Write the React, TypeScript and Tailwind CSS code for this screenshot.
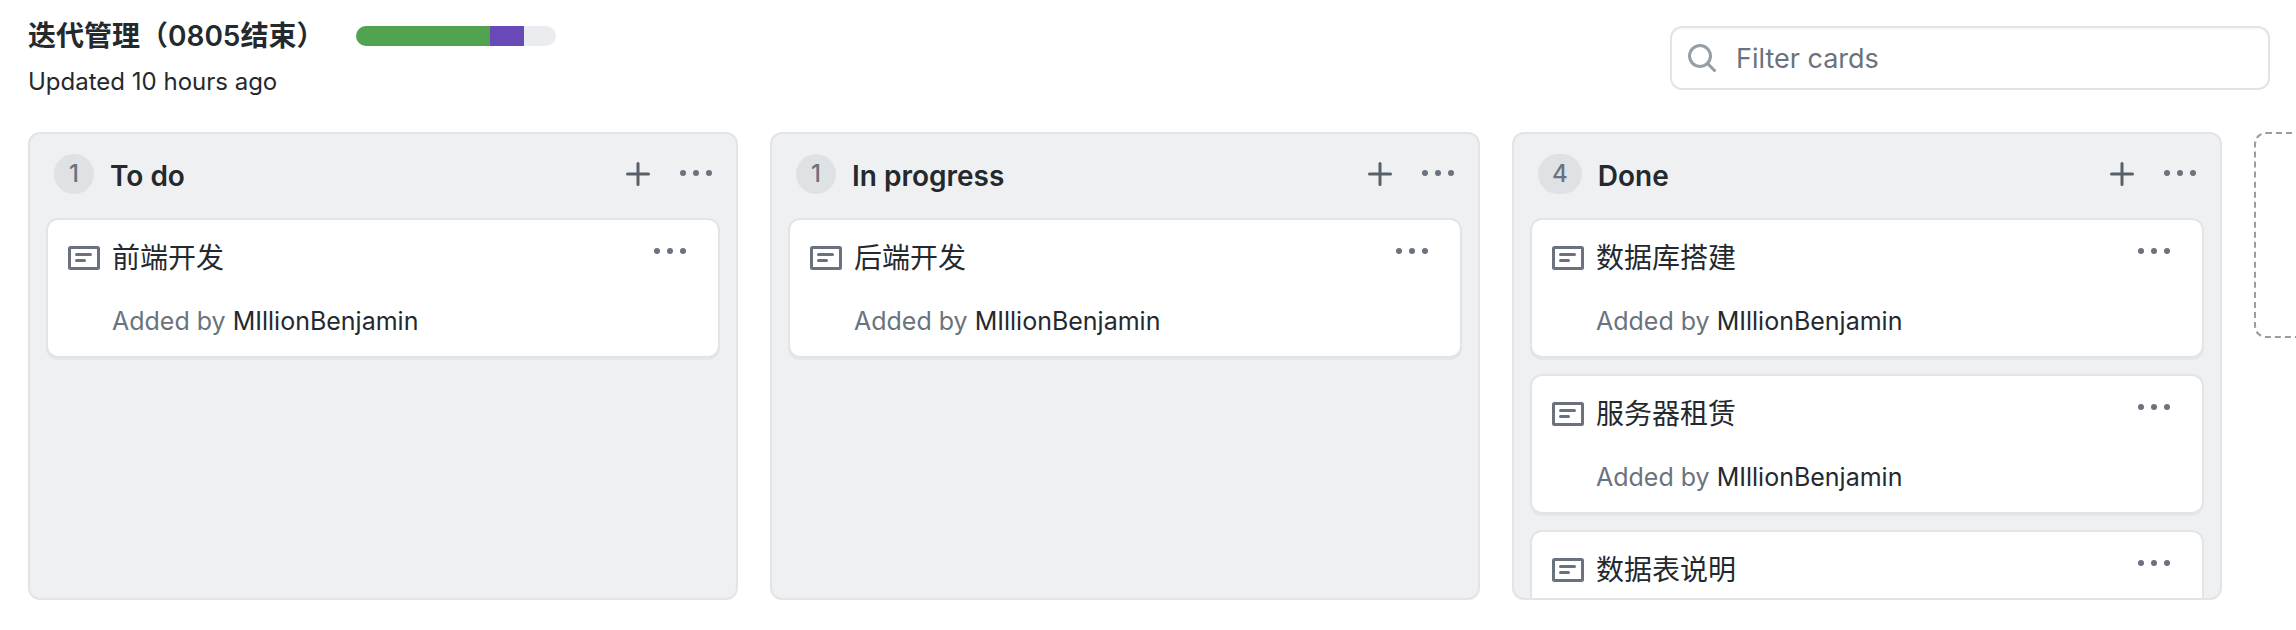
import React from 'react';

type Card = { title: string; author: string };
type ColumnData = { name: string; count: number; cards: Card[] };

const author = 'MIllionBenjamin';

const columns: ColumnData[] = [
  { name: 'To do', count: 1, cards: [{ title: '前端开发', author }] },
  { name: 'In progress', count: 1, cards: [{ title: '后端开发', author }] },
  {
    name: 'Done',
    count: 4,
    cards: [
      { title: '数据库搭建', author },
      { title: '服务器租赁', author },
      { title: '数据表说明', author },
    ],
  },
];

function KebabIcon() {
  return (
    <svg viewBox="0 0 16 16" className="block size-8" fill="currentColor" aria-hidden="true">
      <circle cx="1.5" cy="7.5" r="1.5" />
      <circle cx="8" cy="7.5" r="1.5" />
      <circle cx="14.5" cy="7.5" r="1.5" />
    </svg>
  );
}

function PlusIcon() {
  return (
    <svg viewBox="0 0 16 16" className="block size-8" fill="currentColor" aria-hidden="true">
      <path d="M8 2a.75.75 0 01.75.75V7.25h4.5a.75.75 0 110 1.5H8.75v4.5a.75.75 0 11-1.5 0V8.75H2.75a.75.75 0 010-1.5H7.25V2.75A.75.75 0 018 2z" />
    </svg>
  );
}

function NoteIcon() {
  return (
    <svg
      viewBox="0 0 16 16"
      className="block size-8 shrink-0 text-[#6a737d]"
      fill="none"
      stroke="currentColor"
      strokeWidth="1.5"
      strokeLinecap="round"
      aria-hidden="true"
    >
      <rect x="0.75" y="2.75" width="14.5" height="10.5" rx="0.5" />
      <path d="M4.25 6.25h7M4.25 9.25h4" />
    </svg>
  );
}

function SearchIcon() {
  return (
    <svg viewBox="0 0 16 16" className="block size-8 shrink-0 text-[#959da5]" fill="currentColor" aria-hidden="true">
      <path
        fillRule="evenodd"
        d="M11.5 7a4.499 4.499 0 11-8.998 0A4.499 4.499 0 0111.5 7zm-.82 4.74a6 6 0 111.06-1.06l3.04 3.04a.75.75 0 11-1.06 1.06l-3.04-3.04z"
      />
    </svg>
  );
}

function NoteCard({ card }: { card: Card }) {
  return (
    <li className="flex shrink-0 items-start rounded-xl border-2 border-[#e1e4e8] bg-white pt-4 pr-8 pb-[18px] pl-5 shadow-[0_2px_0_rgba(27,31,35,0.04)]">
      <span className="pt-1.5">
        <NoteIcon />
      </span>
      <div className="min-w-0 flex-1 pl-3">
        <p className="text-[28px] leading-[44px]">{card.title}</p>
        <p className="pt-6 text-[25px] leading-[34px] text-[#6a737d]">
          Added by{' '}
          <a href="#author" className="text-[#24292e]">
            {card.author}
          </a>
        </p>
      </div>
      <button type="button" aria-label={`Options for ${card.title}`} className="text-[#6a737d]">
        <KebabIcon />
      </button>
    </li>
  );
}

function Column({ column }: { column: ColumnData }) {
  return (
    <section className="flex w-[710px] shrink-0 flex-col overflow-hidden rounded-xl border-2 border-[#e1e4e8] bg-[#eff0f2]">
      <header className="flex items-start pt-5 pr-6 pb-[22px] pl-6">
        <span className="flex h-10 min-w-10 items-center justify-center rounded-full bg-[#dfe2e5] px-3.5 text-2xl leading-9 font-medium text-[#6a737d]">
          {column.count}
        </span>
        <h2 className="flex-1 pt-0.5 pl-4 text-[28px] leading-10 font-semibold">{column.name}</h2>
        <div className="flex gap-[26px] pt-1">
          <button type="button" aria-label={`Add a note to ${column.name}`} className="text-[#586069]">
            <PlusIcon />
          </button>
          <button type="button" aria-label={`Column menu for ${column.name}`} className="text-[#6a737d]">
            <KebabIcon />
          </button>
        </div>
      </header>
      <ul className="flex min-h-0 flex-1 flex-col gap-4 overflow-y-auto px-4 [scrollbar-width:none]">
        {column.cards.map((card) => (
          <NoteCard key={card.title} card={card} />
        ))}
      </ul>
    </section>
  );
}

export default function App() {
  return (
    <main className="flex h-screen flex-col overflow-hidden bg-white pb-[30px] font-['Inter','Noto_Sans_CJK_SC',sans-serif] text-[#24292e]">
      <header className="flex shrink-0 items-start justify-between pt-4 pr-[26px] pb-8 pl-7">
        <div>
          <div className="flex items-center gap-8">
            <h1 className="text-[28px] leading-10 font-semibold">迭代管理（0805结束）</h1>
            <div
              role="img"
              aria-label="4 done, 1 in progress, 1 to do"
              className="flex h-5 w-[200px] overflow-hidden rounded-full bg-[#eaecef]"
            >
              <span className="w-[67%] bg-[#52a350]" />
              <span className="w-[17%] bg-[#6949b8]" />
            </div>
          </div>
          <p className="pt-2 text-2xl leading-9">Updated 10 hours ago</p>
        </div>
        <label className="mt-2.5 flex h-16 w-[600px] items-center rounded-xl border-2 border-[#e1e4e8] bg-white pl-3.5 shadow-[inset_0_2px_0_rgba(225,228,232,0.2)]">
          <SearchIcon />
          <input
            type="text"
            aria-label="Filter cards"
            placeholder="Filter cards"
            className="h-full min-w-0 flex-1 bg-transparent pl-[18px] text-[27px] outline-none placeholder:text-[#6a737d]"
          />
        </label>
      </header>
      <div className="flex min-h-0 flex-1 gap-8 pl-7">
        {columns.map((column) => (
          <Column key={column.name} column={column} />
        ))}
        <button
          type="button"
          aria-label="Add column"
          className="h-[206px] w-[710px] shrink-0 rounded-xl border-2 border-dashed border-[#959da5]"
        />
      </div>
    </main>
  );
}
